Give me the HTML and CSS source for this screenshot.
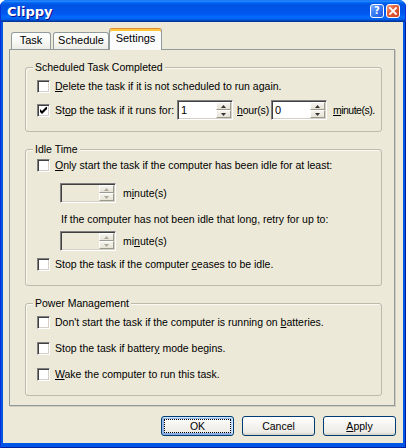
FILE: index.html
```html
<!DOCTYPE html>
<html>
<head>
<meta charset="utf-8">
<title>Clippy</title>
<link rel="stylesheet" href="styles.css">
</head>
<body>
<div class="window">
  <div class="titlebar">
    <span class="title">Clippy</span>
    <div class="cap-btns">
      <span class="cap help">?</span>
      <span class="cap close"><svg width="8" height="8" viewBox="0 0 8 8"><path d="M1 1L7 7M7 1L1 7" stroke="#fff" stroke-width="1.8" stroke-linecap="square"/></svg></span>
    </div>
  </div>
  <div class="frame">
    <div class="client">
      <div class="tabs">
        <div class="tab tab-task">Task</div>
        <div class="tab tab-schedule">Schedule</div>
        <div class="tab tab-settings active">Settings</div>
      </div>
      <div class="panel">
        <div class="group g1">
          <div class="legend">Scheduled Task Completed</div>
          <div class="row mt6"><span class="cb"></span><span class="lbl"><u>D</u>elete the task if it is not scheduled to run again.</span></div>
          <div class="row tall mt7">
            <span class="cb"><svg width="7" height="7" viewBox="0 0 7 7"><path d="M0 2L2 4L6 0L7 0L7 2L2 7L0 5Z" fill="#000"/></svg></span>
            <span class="lbl">St<u>o</u>p the task if it runs for:</span>
            <span class="spin sp-hours"><span class="val">1</span><span class="arrows"><span class="ab"><svg width="5" height="3" viewBox="0 0 5 3"><path d="M2.5 0L5 3H0Z" fill="#333"/></svg></span><span class="ab"><svg width="5" height="3" viewBox="0 0 5 3"><path d="M0 0H5L2.5 3Z" fill="#333"/></svg></span></span></span>
            <span class="unit u-hours"><u>h</u>our(s)</span>
            <span class="spin sp-mins"><span class="val">0</span><span class="arrows"><span class="ab"><svg width="5" height="3" viewBox="0 0 5 3"><path d="M2.5 0L5 3H0Z" fill="#333"/></svg></span><span class="ab"><svg width="5" height="3" viewBox="0 0 5 3"><path d="M0 0H5L2.5 3Z" fill="#333"/></svg></span></span></span>
            <span class="unit u-mins"><u>m</u>inute(s).</span>
          </div>
        </div>

        <div class="group g2">
          <div class="legend">Idle Time</div>
          <div class="row mt3"><span class="cb"></span><span class="lbl"><u>O</u>nly start the task if the computer has been idle for at least:</span></div>
          <div class="row tall indent mt11">
            <span class="spin disabled"><span class="val"></span><span class="arrows"><span class="ab"><svg width="5" height="3" viewBox="0 0 5 3"><path d="M2.5 0L5 3H0Z" fill="#ACA899"/></svg></span><span class="ab"><svg width="5" height="3" viewBox="0 0 5 3"><path d="M0 0H5L2.5 3Z" fill="#ACA899"/></svg></span></span></span>
            <span class="unit u-idle">m<u>i</u>nute(s)</span>
          </div>
          <div class="row text-indent mt10"><span>If the computer has not been idle that long, retry for up to:</span></div>
          <div class="row tall indent mt5">
            <span class="spin disabled"><span class="val"></span><span class="arrows"><span class="ab"><svg width="5" height="3" viewBox="0 0 5 3"><path d="M2.5 0L5 3H0Z" fill="#ACA899"/></svg></span><span class="ab"><svg width="5" height="3" viewBox="0 0 5 3"><path d="M0 0H5L2.5 3Z" fill="#ACA899"/></svg></span></span></span>
            <span class="unit u-idle">mi<u>n</u>ute(s)</span>
          </div>
          <div class="row mt7"><span class="cb"></span><span class="lbl">Stop the task if the computer <u>c</u>eases to be idle.</span></div>
        </div>

        <div class="group g3">
          <div class="legend">Power Management</div>
          <div class="row mt6"><span class="cb"></span><span class="lbl">Don't start the task if the computer is running on <u>b</u>atteries.</span></div>
          <div class="row mt13"><span class="cb"></span><span class="lbl">Stop the task if batter<u>y</u> mode begins.</span></div>
          <div class="row mt13"><span class="cb"></span><span class="lbl"><u>W</u>ake the computer to run this task.</span></div>
        </div>
      </div>
      <div class="buttons">
        <button class="btn default">OK</button>
        <button class="btn">Cancel</button>
        <button class="btn"><span><u>A</u>pply</span></button>
      </div>
    </div>
  </div>
</div>
</body>
</html>
```

FILE: styles.css
```css
* { box-sizing: border-box; }
html, body { margin: 0; padding: 0; }
body {
  width: 406px;
  height: 448px;
  overflow: hidden;
  background: #fff;
  font-family: "Liberation Sans", Arial, sans-serif;
  font-size: 10.5px;
  color: #000;
}
u { text-decoration: underline; text-underline-offset: 1px; }

.window {
  width: 406px;
  height: 448px;
  display: flex;
  flex-direction: column;
  border-radius: 7px 7px 0 0;
  overflow: hidden;
  background: #0054E3;
}

.titlebar {
  height: 22px;
  flex: none;
  display: flex;
  align-items: center;
  padding: 0 6px 0 7px;
  background: linear-gradient(180deg, #0058EE 0%, #3593FF 4%, #288EFF 6%, #127DFF 8%, #036FFC 10%, #0262EE 14%, #0057E5 20%, #0054E3 24%, #0055EB 56%, #005BF5 66%, #026AFE 76%, #0062EF 86%, #0052D6 92%, #0040AB 94%, #003092 100%);
  box-shadow: inset 1px 0 #0831D9, inset -1px 0 #0831D9;
}
.title {
  flex: 1;
  font-family: "DejaVu Sans", sans-serif;
  font-weight: bold;
  font-size: 13px;
  line-height: 16px;
  padding-top: 2px;
  color: #fff;
  text-shadow: 1px 1px #0F1089;
}
.cap-btns { display: flex; gap: 2px; }
.cap {
  width: 14px;
  height: 14px;
  border: 1px solid #fff;
  border-radius: 3px;
  display: flex;
  align-items: center;
  justify-content: center;
  color: #fff;
}
.help {
  background: linear-gradient(135deg, #7EB0FF 0%, #3A7CF5 45%, #2058DE 100%);
  font-family: "DejaVu Sans", sans-serif;
  font-weight: bold;
  font-size: 10px;
  line-height: 12px;
}
.close {
  background: linear-gradient(135deg, #F4A588 0%, #E2603A 40%, #D2431E 100%);
}

.frame {
  flex: 1;
  display: flex;
  padding: 0 3px 5px 3px;
  background: #0055E5;
  box-shadow: inset 1px 0 #0831D9, inset -1px 0 #001EA0, inset 0 -1px #001EA0;
}
.client {
  flex: 1;
  display: flex;
  flex-direction: column;
  background: #ECE9D8;
  padding: 0 7px 7px 6px;
}

.tabs {
  height: 27px;
  flex: none;
  display: flex;
  align-items: flex-end;
  padding-left: 2px;
}
.tab {
  height: 17px;
  border: 1px solid #919B9C;
  border-bottom: 0;
  border-radius: 3px 3px 0 0;
  background: linear-gradient(180deg, #FFFFFF 0%, #F8F8F5 50%, #ECEBE6 100%);
  text-align: center;
  font-size: 11px;
  line-height: 15px;
}
.tab-task { width: 40px; margin-right: 2px; }
.tab-schedule { width: 56px; }
.tab-settings { width: 53px; }
.tab.active {
  position: relative;
  z-index: 1;
  height: 22px;
  margin-bottom: -1px;
  background: #FCFCFE;
  border-top-color: #E68B2C;
  box-shadow: inset 0 2px 0 #FFC73C;
  line-height: 17px;
  padding-top: 1px;
}

.panel {
  width: 386px;
  height: 357px;
  flex: none;
  border: 1px solid #919B9C;
  background: #ECE9D8;
  padding: 17px 12px 9px 15px;
  box-shadow: 1px 1px 0 #D0CDBE;
}

.group {
  border: 1px solid #BDBAAB;
  border-radius: 3px;
  padding: 0 11px;
  box-shadow: inset 1px 1px 0 #FAF9F4;
}
.g1 { padding-bottom: 11px; }
.g2 { margin-top: 17px; padding-bottom: 14px; }
.g3 { margin-top: 17px; padding-bottom: 14px; }
.legend {
  width: fit-content;
  margin: -7px 0 0 -4px;
  padding: 0 2px;
  background: #ECE9D8;
  line-height: 13px;
}

.row {
  display: flex;
  align-items: center;
  height: 13px;
  line-height: 13px;
  white-space: nowrap;
}
.row.tall { height: 20px; }
.mt3 { margin-top: 3px; }
.mt5 { margin-top: 5px; }
.mt6 { margin-top: 6px; }
.mt7 { margin-top: 7px; }
.mt10 { margin-top: 10px; }
.mt11 { margin-top: 11px; }
.mt13 { margin-top: 13px; }
.indent { margin-left: 23px; }
.text-indent { margin-left: 24px; }

.cb {
  width: 13px;
  height: 13px;
  flex: none;
  border: 1px solid;
  border-color: #808080 #FFFFFF #FFFFFF #808080;
  box-shadow: inset 1px 1px 0 #404040, inset -1px -1px 0 #D4D0C8;
  background: #fff;
  display: flex;
  align-items: center;
  justify-content: center;
}
.cb svg { display: block; }
.lbl { margin-left: 5px; }

.spin {
  width: 56px;
  height: 20px;
  flex: none;
  display: flex;
  border: 1px solid;
  border-color: #808080 #FFFFFF #FFFFFF #808080;
  box-shadow: inset 1px 1px 0 #404040, inset -1px -1px 0 #D4D0C8;
  background: #fff;
  padding: 1px 1px 1px 2px;
}
.spin.disabled { background: #ECE9D8; }
.sp-hours { margin-left: 3px; }
.sp-mins { margin-left: 2px; }
.spin .val {
  flex: 1;
  line-height: 16px;
  padding-left: 1px;
  font-size: 11px;
}
.arrows {
  width: 15px;
  display: flex;
  flex-direction: column;
}
.ab {
  flex: 1;
  display: flex;
  align-items: center;
  justify-content: center;
  background: linear-gradient(180deg, #F4F3EE, #E6E3D6);
  border: 1px solid;
  border-color: #FFFFFF #9C9A8C #9C9A8C #FFFFFF;
}
.ab svg { display: block; }

.unit { line-height: 13px; }
.u-hours { margin-left: 4px; letter-spacing: -0.2px; }
.u-mins { margin-left: 6px; letter-spacing: -0.5px; }
.u-idle { margin-left: 7px; }

.buttons {
  display: flex;
  justify-content: flex-end;
  gap: 8px;
  margin-top: 10px;
}
.btn {
  width: 73px;
  height: 20px;
  padding: 0;
  margin: 0;
  border: 1px solid #003C74;
  border-radius: 3px;
  background: linear-gradient(180deg, #FFFFFF 0%, #F6F5F1 40%, #ECEBE6 85%, #D6D0C5 100%);
  font-family: inherit;
  font-size: 10.5px;
  color: #000;
  line-height: 16px;
}
.btn.default {
  box-shadow: inset -1px 1px #CEE7FF, inset 1px 2px #98B8EA, inset -2px 2px #BCD4F6, inset 1px -1px #89ADE4, inset 2px -2px #89ADE4;
  outline: 1px dotted #000;
  outline-offset: -4px;
}
```
